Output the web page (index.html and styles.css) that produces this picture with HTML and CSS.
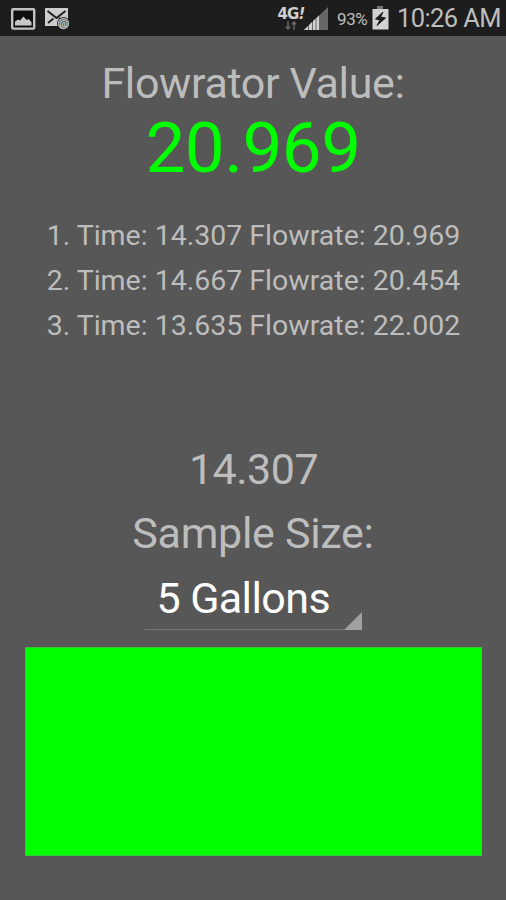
FILE: index.html
```html
<!DOCTYPE html>
<html lang="en">
<head>
    <meta charset="UTF-8">
    <meta name="viewport" content="width=device-width, initial-scale=1.0">
    <title>Flowrator</title>
    <link rel="stylesheet" href="styles.css">
</head>
<body>

    <!-- Status Bar -->
    <header class="status-bar">
        <svg class="icon-picture" width="25" height="22" viewBox="0 0 25 22">
            <rect x="1.2" y="1.2" width="22" height="19.4" rx="1" fill="#101010" stroke="#c4c4c4" stroke-width="2.4"/>
            <path d="M4 17.500v-4l3-2 2 1 3.500-4 3 3.500 2-1 3 3v3.500z" fill="#c8c8c8"/>
        </svg>
        <svg class="icon-mail" width="26" height="23" viewBox="0 0 26 23">
            <rect x="0" y="0" width="23" height="18" fill="#cccccc"/>
            <path d="M2.500 3l9 7 9-7M3 15l5.500-4.500M14 10l3 2" fill="none" stroke="#202020" stroke-width="2"/>
            <circle cx="18.500" cy="15.500" r="6.500" fill="#202020"/>
            <circle cx="18.500" cy="15.500" r="5" fill="#555" stroke="#b4b4b4" stroke-width="1.300"/>
            <text class="at-sign" x="18.500" y="18.500" text-anchor="middle">@</text>
        </svg>
        <div class="network">
            <span class="network-type">4G<i>!</i></span>
            <svg width="12" height="9" viewBox="0 0 12 9">
                <path d="M3 0v8M.8 5.500L3 8l2.200-2.500M9 9V1M6.800 3.500L9 1l2.200 2.500" fill="none" stroke="#666" stroke-width="1.500"/>
            </svg>
        </div>
        <svg class="icon-signal" width="25" height="24" viewBox="0 0 25 24">
            <path d="M0 23L24 0v23z" fill="#666"/>
            <path d="M0 23l4-4v4zM5 18l3-3v8H5zM9 14l2.500-2.400V23H9zM12.500 11L15 8.600V23h-2.500z" fill="#d0d0d0"/>
        </svg>
        <span class="battery-level">93%</span>
        <svg class="icon-battery" width="17" height="24" viewBox="0 0 17 24">
            <path d="M5 0h6v3H5z" fill="#777"/>
            <path d="M.5 3h16v20.500H.5z" fill="#d2d2d2"/>
            <path d="M11 6L3.500 13l4.500 1-3 5.500 8.500-7.500-5-1z" fill="#1c1c1c" stroke="#1c1c1c"/>
        </svg>
        <span class="clock">10:26 AM</span>
    </header>

    <!-- Main Content -->
    <main class="content">
        <h1 class="title">Flowrator Value:</h1>
        <div class="value">20.969</div>

        <div class="results">
            <div>1. Time: 14.307 Flowrate: 20.969</div>
            <div>2. Time: 14.667 Flowrate: 20.454</div>
            <div>3. Time: 13.635 Flowrate: 22.002</div>
        </div>

        <div class="timer">14.307</div>
        <div class="sample-label">Sample Size:</div>
        <div class="spinner"><span>5 Gallons</span></div>
        <button class="start-button" type="button" aria-label="Start timer"></button>
    </main>

</body>
</html>
```

FILE: styles.css
```css
body {
    font-family: Roboto, "Liberation Sans", sans-serif;
    background-color: #575757;
    color: #bdbdbd;
    margin: 0;
    height: 900px;
    overflow: hidden;
}

/* Status Bar */
.status-bar {
    display: flex;
    align-items: flex-start;
    height: 36px;
    background-color: #1d1d1d;
    white-space: nowrap;
}

.icon-picture {
    margin: 8px 0 0 11px;
}

.icon-mail {
    margin: 8px 0 0 9px;
}

.at-sign {
    font-size: 9px;
    font-weight: bold;
    fill: #d0d0d0;
}

.network {
    display: flex;
    flex-direction: column;
    align-items: center;
    width: 28px;
    margin: 7px 0 0 206px;
}

.network-type {
    font-family: "DejaVu Sans", sans-serif;
    font-size: 15px;
    font-weight: 700;
    line-height: 14px;
    letter-spacing: -0.8px;
    color: #d0d0d0;
}

.network-type i {
    font-style: italic;
}

.icon-signal {
    margin: 7px 0 0 -1px;
}

.battery-level {
    width: 32px;
    margin: 8px 0 0 8px;
    font-size: 17px;
    line-height: 22px;
    letter-spacing: -0.4px;
}

.icon-battery {
    margin: 6px 0 0 3px;
}

.clock {
    margin-left: 8px;
    font-size: 25.5px;
    line-height: 37px;
    letter-spacing: -0.6px;
}

/* Main Content */
.content {
    display: flex;
    flex-direction: column;
    align-items: center;
    padding-top: 21px;
}

.title {
    margin: 0;
    font-size: 43px;
    font-weight: 400;
    line-height: 52px;
    letter-spacing: -0.35px;
}

.value {
    font-size: 71px;
    line-height: 78px;
    letter-spacing: -0.5px;
    color: #00ff00;
}

.results {
    margin-top: 26px;
    padding-left: 1px;
    font-size: 28.5px;
    line-height: 45px;
}

.timer {
    margin-top: 89px;
    padding-left: 1px;
    font-size: 43px;
    line-height: 64px;
    letter-spacing: -0.5px;
}

.sample-label {
    font-size: 43px;
    line-height: 65px;
    letter-spacing: -0.3px;
}

.spinner {
    position: relative;
    box-sizing: border-box;
    width: 217px;
    height: 64px;
    padding-left: 12px;
    border-bottom: 1px solid #777777;
    font-size: 43px;
    line-height: 64px;
    letter-spacing: -0.6px;
    color: #ffffff;
}

/* corner triangle of the dropdown */
.spinner::after {
    content: "";
    position: absolute;
    right: 0;
    bottom: -1px;
    border-left: 18px solid transparent;
    border-bottom: 18px solid #a0a0a0;
}

.start-button {
    width: 457px;
    height: 209px;
    margin-top: 17px;
    padding: 0;
    border: 1px solid #35c935;
    background-color: #00ff00;
}
```
